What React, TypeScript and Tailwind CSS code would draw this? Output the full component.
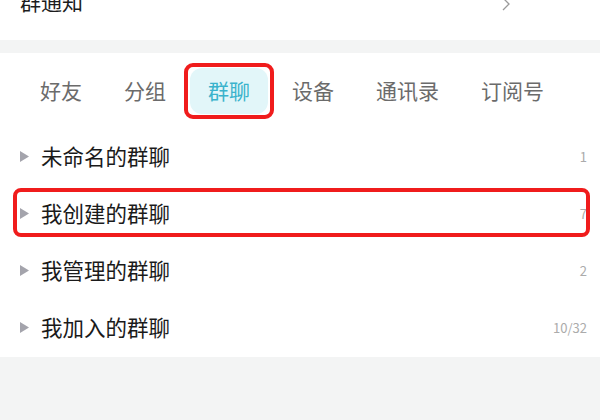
import React from "react";

const tabs = ["好友", "分组", "群聊", "设备", "通讯录", "订阅号"];
const rows = [
  { name: "未命名的群聊", count: "1" },
  { name: "我创建的群聊", count: "7", boxed: true },
  { name: "我管理的群聊", count: "2" },
  { name: "我加入的群聊", count: "10/32" },
];

export default function App() {
  return (
    <div
      className="w-[600px] h-[420px] overflow-hidden bg-[#f3f4f4]"
      style={{ fontFamily: '"Noto Sans CJK SC", "Noto Sans", sans-serif' }}
    >
      {/* top row, cut off */}
      <div className="relative h-[40px] bg-white overflow-hidden flex justify-between">
        <div className="pl-[20px] mt-[-11px] text-[21px] leading-[24px] text-[#1c1c1c]">群通知</div>
        <svg className="absolute left-[501px] top-[-3px]" width="10" height="14" viewBox="0 0 10 14">
          <polyline points="2,1 8,7 2,13" fill="none" stroke="#9a9a9a" strokeWidth="1.3" />
        </svg>
      </div>
      <div className="h-[13px]" />
      {/* tabs */}
      <div className="bg-white h-[75px] flex items-center pl-[22px] gap-[6px]">
        {tabs.map((t) => {
          const active = t === "群聊";
          return (
            <div key={t} className="relative">
              <div
                className={
                  active
                    ? "h-[46px] px-[18px] flex items-center rounded-[12px] bg-[#e2f6f9] text-[#3ab3cc] text-[21px]"
                    : "h-[46px] px-[18px] flex items-center text-[21px] text-[#6b6b6b]"
                }
              >
                {t}
              </div>
              {active && (
                <div className="absolute left-[-6px] right-[-6px] top-[-5px] bottom-[-5px] border-[4px] border-[#f01c1c] rounded-[9px]" />
              )}
            </div>
          );
        })}
      </div>
      {/* rows */}
      <div className="bg-white pb-[1px]">
        {rows.map((r) => (
          <div key={r.name} className="relative h-[57px] flex items-center">
            <svg className="ml-[20px]" width="9" height="11" viewBox="0 0 9 11">
              <polygon points="0,0 9,5.5 0,11" fill="#a4a4ac" />
            </svg>
            <div className="ml-[12px] text-[21.5px] text-[#1a1a1a]">{r.name}</div>
            <div className="ml-auto mr-[13px] text-[13px] text-[#ababab]">{r.count}</div>
            {r.boxed && (
              <div className="absolute left-[13px] right-[10px] top-[3px] h-[49px] border-[4px] border-[#f01c1c] rounded-[8px]" />
            )}
          </div>
        ))}
      </div>
    </div>
  );
}
